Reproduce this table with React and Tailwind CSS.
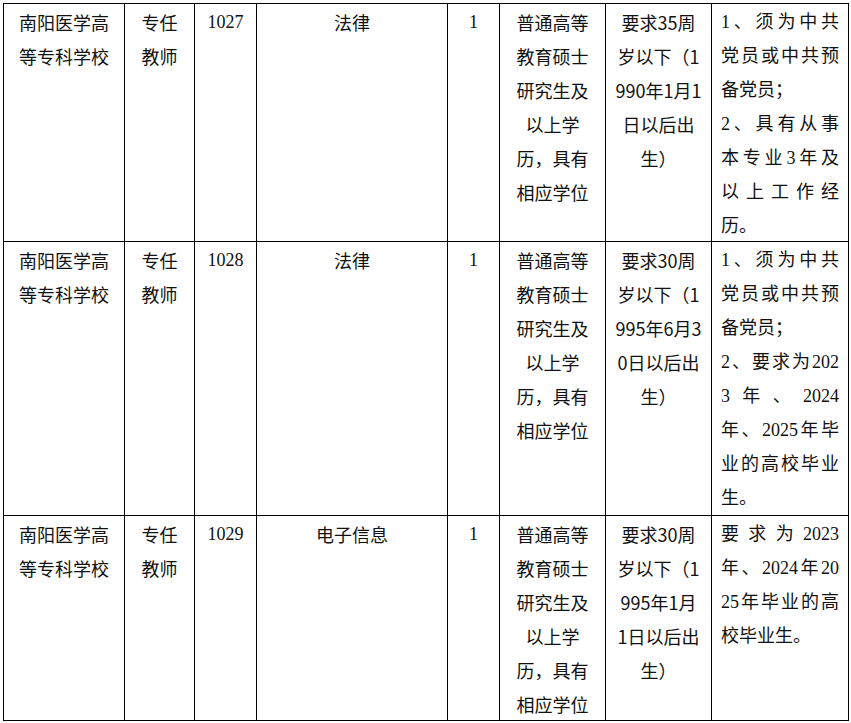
import React from "react";

const sans = "font-['Noto_Sans_CJK_SC',sans-serif]";
const serif = "font-['Liberation_Serif','Noto_Sans_CJK_SC',serif]";

const Cell = ({ children, className = "" }) => (
  <div className={`border-r border-b border-black pt-px text-[18px] leading-[34px] ${className}`}>
    {children}
  </div>
);

const Lines = ({ lines }) => (
  <>
    {lines.map((l, i) => (
      <div key={i}>{l}</div>
    ))}
  </>
);

const J = ({ items }) => (
  <div className="flex justify-between">
    {items.map((t, i) => (
      <span key={i}>{t}</span>
    ))}
  </div>
);

const rows = [
  {
    code: "1027",
    major: "法律",
    age: ["要求35周", "岁以下（1", "990年1月1", "日以后出", "生）"],
    req: [
      ["1", "、", "须", "为", "中", "共"],
      ["党", "员", "或", "中", "共", "预"],
      "备党员；",
      ["2", "、", "具", "有", "从", "事"],
      ["本", "专", "业", "3", "年", "及"],
      ["以", "上", "工", "作", "经"],
      "历。",
    ],
  },
  {
    code: "1028",
    major: "法律",
    age: ["要求30周", "岁以下（1", "995年6月3", "0日以后出", "生）"],
    req: [
      ["1", "、", "须", "为", "中", "共"],
      ["党", "员", "或", "中", "共", "预"],
      "备党员；",
      ["2", "、", "要", "求", "为", "202"],
      ["3", "年", "、", "2024"],
      ["年", "、", "2025", "年", "毕"],
      ["业", "的", "高", "校", "毕", "业"],
      "生。",
    ],
  },
  {
    code: "1029",
    major: "电子信息",
    age: ["要求30周", "岁以下（1", "995年1月", "1日以后出", "生）"],
    req: [
      ["要", "求", "为", "2023"],
      ["年", "、", "2024", "年", "20"],
      ["25", "年", "毕", "业", "的", "高"],
      "校毕业生。",
    ],
  },
];

export default function App() {
  return (
    <div className={`bg-white text-[#111] ${sans} w-[851px] h-[723px] overflow-hidden pt-[3px] pl-[3px]`}>
      <div className="grid w-max grid-cols-[121px_70px_62px_191px_52px_106px_106px_137px] grid-rows-[238px_274px_205px] border-l border-t border-black">
        {rows.map((r, idx) => (
          <React.Fragment key={idx}>
            <Cell className="text-center px-[6px]">
              <Lines lines={["南阳医学高", "等专科学校"]} />
            </Cell>
            <Cell className="text-center">
              <Lines lines={["专任", "教师"]} />
            </Cell>
            <Cell className={`text-center ${serif}`}>{r.code}</Cell>
            <Cell className="text-center">{r.major}</Cell>
            <Cell className={`text-center ${serif}`}>1</Cell>
            <Cell className="text-center">
              <Lines lines={["普通高等", "教育硕士", "研究生及", "以上学", "历，具有", "相应学位"]} />
            </Cell>
            <Cell className="text-center">
              <Lines lines={r.age} />
            </Cell>
            <Cell className={`px-[9px] ${serif}`}>
              {r.req.map((l, i) =>
                Array.isArray(l) ? <J key={i} items={l} /> : <div key={i}>{l}</div>
              )}
            </Cell>
          </React.Fragment>
        ))}
      </div>
    </div>
  );
}
